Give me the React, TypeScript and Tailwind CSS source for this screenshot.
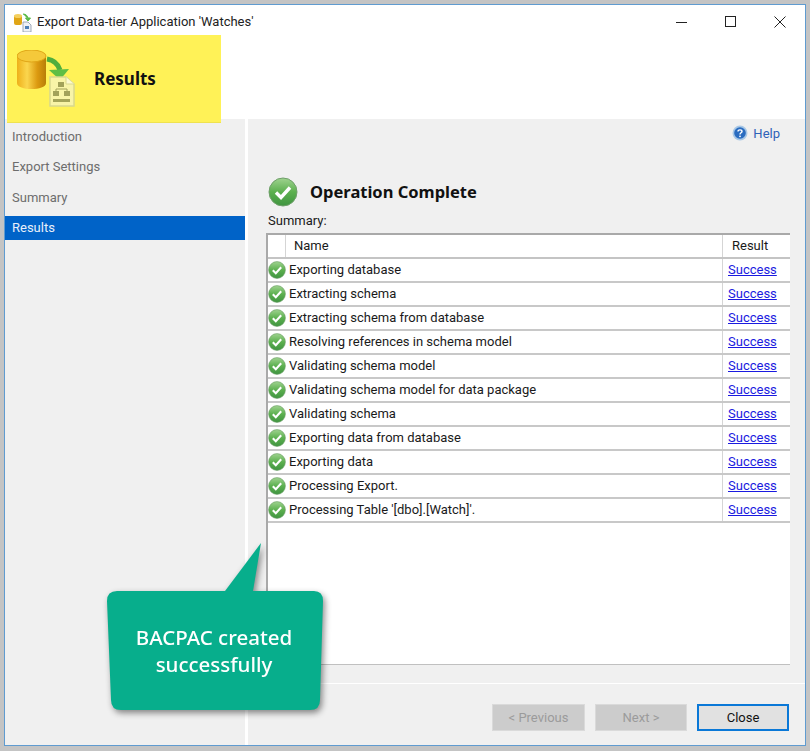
const font = { fontFamily: 'Roboto, "Noto Sans", sans-serif' };
const heading = { fontFamily: '"Noto Sans", "Open Sans", sans-serif' };

const rows = [
  "Exporting database",
  "Extracting schema",
  "Extracting schema from database",
  "Resolving references in schema model",
  "Validating schema model",
  "Validating schema model for data package",
  "Validating schema",
  "Exporting data from database",
  "Exporting data",
  "Processing Export.",
  "Processing Table '[dbo].[Watch]'.",
];

const CheckIcon = ({ size }: { size: number }) => (
  <svg width={size} height={size} viewBox="0 0 30 30" className="shrink-0">
    <defs>
      <linearGradient id="chk" x1="0" y1="0" x2="0" y2="1">
        <stop offset="0" stopColor="#9fd38f" />
        <stop offset="0.5" stopColor="#5cb04f" />
        <stop offset="1" stopColor="#3f9440" />
      </linearGradient>
    </defs>
    <circle cx="15" cy="15" r="14" fill="url(#chk)" stroke="#6f9f6a" strokeWidth="1" />
    <path d="M8 15.5 L13 20.5 L22 10.5" fill="none" stroke="#fff" strokeWidth="3.4" />
  </svg>
);

const HelpIcon = () => (
  <svg width="16" height="16" viewBox="0 0 16 16">
    <circle cx="8" cy="8" r="7.5" fill="#a9c8e6" />
    <circle cx="8" cy="8" r="5.8" fill="#2a6cc0" />
    <path d="M6 6.4 C6 4.4 10 4.4 10 6.4 C10 7.8 8 7.8 8 9.4" fill="none" stroke="#fff" strokeWidth="1.4" />
    <circle cx="8" cy="11.3" r="0.9" fill="#fff" />
  </svg>
);

const TitleIcon = () => (
  <svg width="20" height="20" viewBox="0 0 20 20">
    <rect x="1" y="3" width="8" height="10" rx="2" fill="#e0a516" />
    <ellipse cx="5" cy="4" rx="4" ry="2" fill="#f4cf5e" />
    <path d="M10 2 C13 2 15 4 15 7 M12.5 6 L15 9 L17.5 6 Z" fill="#58b947" stroke="#58b947" />
    <path d="M10 10 H15 L18 13 V20 H10 Z" fill="#eef1f6" stroke="#8a97a8" strokeWidth="0.8" />
    <rect x="12" y="14" width="4" height="3" fill="#4d7fb8" />
  </svg>
);

const WizardIcon = () => (
  <svg width="58" height="57" viewBox="0 0 58 57" className="shrink-0">
    <defs>
      <linearGradient id="can" x1="0" y1="0" x2="1" y2="0">
        <stop offset="0" stopColor="#eeb01a" />
        <stop offset="0.35" stopColor="#fbd64e" />
        <stop offset="0.7" stopColor="#dc9a10" />
        <stop offset="1" stopColor="#b87e08" />
      </linearGradient>
    </defs>
    <path d="M0 6 V33 C0 41 29 41 29 33 V6 Z" fill="url(#can)" />
    <ellipse cx="14.5" cy="6" rx="14.5" ry="6" fill="#f5c93a" stroke="#e0a516" strokeWidth="1" />
    <path d="M30 9 C37 10 41 14 43 20" fill="none" stroke="#4fae3d" strokeWidth="5" />
    <path d="M32 20 L52 19 L43 30 Z" fill="#5fbe45" />
    <path d="M33 27 H49 L57 34 V56 H33 Z" fill="#f8f4a8" stroke="#d8d88f" strokeWidth="1.5" />
    <path d="M49 27 V34 H57" fill="#fbf9d0" stroke="#d8d88f" strokeWidth="1" />
    <rect x="41" y="32" width="6" height="5" fill="#a2a25a" />
    <rect x="36" y="41" width="6" height="5" fill="#a2a25a" />
    <rect x="47" y="41" width="6" height="5" fill="#a2a25a" />
    <path d="M39 41 V39 H50 V41" fill="none" stroke="#a2a25a" />
    <rect x="36" y="49" width="17" height="3" fill="#a5a55a" />
  </svg>
);

const Callout = () => (
  <div className="absolute left-[107px] top-[543px] w-[217px] h-[170px] drop-shadow-[2px_3px_3px_rgba(0,0,0,0.45)]">
    <svg width="217" height="170" viewBox="0 0 217 170" className="absolute inset-0">
      <path
        d="M10 48 H118 L154 0 L146 48 H207 Q216 48 216 58 L213 157 Q213 167 203 167 H14 Q4 167 4 157 L0 58 Q0 48 10 48 Z"
        fill="#07ae8c"
      />
    </svg>
    <div style={heading} className="absolute left-0 right-[3px] top-[81px] text-center text-white text-[20.5px] font-medium leading-[27px]">
      <p>BACPAC created</p>
      <p>successfully</p>
    </div>
  </div>
);

const App = () => {
  return (
    <div style={font} className="relative w-[810px] h-[751px] bg-[#c4c4c4] pt-1 pl-1 pr-1 pb-[5px] text-[13px] text-[#1a1a1a] overflow-hidden">
      <div className="flex h-full w-full flex-col border border-[#5f9bd0] bg-white">
        {/* title bar */}
        <div className="flex h-[30px] shrink-0 items-center pt-[4px]">
          <div className="ml-[8px] mr-[4px]">
            <TitleIcon />
          </div>
          <span className="text-[#222]">Export Data-tier Application 'Watches'</span>
          <div className="ml-auto flex items-center gap-[37px] pr-[19px]">
            <svg width="12" height="12" viewBox="0 0 12 12"><path d="M0 6.5 H11" stroke="#222" strokeWidth="1" /></svg>
            <svg width="12" height="12" viewBox="0 0 12 12"><rect x="0.5" y="0.5" width="10" height="10" fill="none" stroke="#222" strokeWidth="1" /></svg>
            <svg width="12" height="12" viewBox="0 0 12 12"><path d="M0.5 0.5 L11.5 11.5 M11.5 0.5 L0.5 11.5" stroke="#222" strokeWidth="1" /></svg>
          </div>
        </div>

        {/* wizard header */}
        <div className="h-[84px] shrink-0" />

        <div className="flex min-h-0 flex-1">
          {/* steps */}
          <div className="flex w-[240px] shrink-0 flex-col bg-[#f0f0f0] pt-[2px] text-[#6d6d6d]">
            {["Introduction", "Export Settings", "Summary"].map((step) => (
              <div key={step} className="flex h-[30.5px] items-center pl-[7px]">
                {step}
              </div>
            ))}
            <div className="mt-[3px] flex h-[24px] items-center bg-[#0063c8] pl-[7px] text-[#e8f0fa]">Results</div>
          </div>

          {/* results panel */}
          <div className="ml-[3px] flex min-w-0 flex-1 flex-col bg-[#f0f0f0]">
            <div className="flex h-[58px] shrink-0 items-start justify-end gap-[5px] pr-[25px] pt-[5px] text-[#2f62b8]">
              <div className="mt-[1px]"><HelpIcon /></div>
              <span>Help</span>
            </div>
            <div className="ml-[20px] flex items-center gap-[12px]">
              <CheckIcon size={30} />
              <span style={heading} className="text-[16.5px] font-bold text-[#111]">Operation Complete</span>
            </div>
            <div className="ml-[20px] mt-[5px] leading-[18px]">Summary:</div>
            <div className="ml-[18px] mr-[15px] mt-[3px] flex h-[432px] flex-col border-2 border-b border-r-0 border-[#a9a9a9] border-b-[#c0c0c0] bg-white">
              <div className="flex h-[24px] shrink-0 border-b-2 border-[#c4c4c4]">
                <div className="w-[18px] shrink-0 border-r border-[#d5d5d5]" />
                <div className="flex-1 pl-[8px] leading-[22px]">Name</div>
                <div className="w-[68px] shrink-0 border-l border-[#d5d5d5] pl-[9px] leading-[22px]">Result</div>
              </div>
              {rows.map((row) => (
                <div key={row} className="flex h-[24px] shrink-0 items-center border-b-2 border-[#c8c8c8]">
                  <div className="flex w-[18px] shrink-0 justify-center">
                    <CheckIcon size={18} />
                  </div>
                  <div className="flex-1 pl-[3px]">{row}</div>
                  <div className="flex h-full w-[68px] shrink-0 items-center border-l border-[#d5d5d5] pl-[5px] text-[#1a1ae0] underline">
                    Success
                  </div>
                </div>
              ))}
            </div>
            <div className="mt-[18px] h-[1px] shrink-0 bg-white" />
            <div className="flex flex-1 items-start justify-end gap-[10px] pr-[16px] pt-[20px]">
              <button className="flex h-[27px] w-[93px] items-center justify-center border border-[#dadada] bg-[#cccccc] text-[#9b9b9b]">&lt; Previous</button>
              <button className="flex h-[27px] w-[92px] items-center justify-center border border-[#dadada] bg-[#cccccc] text-[#9b9b9b]">Next &gt;</button>
              <button className="flex h-[27px] w-[92px] items-center justify-center border-2 border-[#0a78d7] bg-[#e1e1e1] text-[#111]">Close</button>
            </div>
          </div>
        </div>
      </div>

      {/* yellow highlight */}
      <div className="absolute left-[7px] top-[35px] flex h-[87px] w-[214px] items-center bg-[#fff257] pl-[10px] shadow-[0_1px_0_#efe24f]">
        <WizardIcon />
        <span style={heading} className="ml-[19px] text-[17px] font-bold text-[#111]">Results</span>
      </div>

      <Callout />
    </div>
  );
};

export default App;
